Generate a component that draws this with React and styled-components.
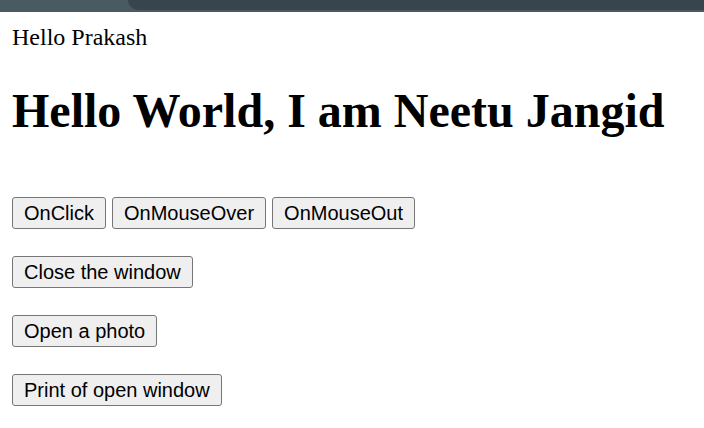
import React from "react";
import styled, { createGlobalStyle } from "styled-components";

const Global = createGlobalStyle`
  html, body { margin: 0; padding: 0; background: #ffffff; }
  body { font-family: "Liberation Serif", "Times New Roman", serif; }
`;

const ChromeBar = styled.div`
  position: relative;
  height: 12px;
  background: #4a5a63;
  overflow: hidden;
`;

const ChromeTab = styled.div`
  position: absolute;
  left: 128px;
  right: 0;
  top: 0;
  height: 10px;
  background: #38454d;
  border-bottom-left-radius: 10px;
`;

const Page = styled.main`
  padding: 12px;
  color: #000;
`;

const Greeting = styled.div`
  font-size: 24px;
  line-height: normal;
`;

const Title = styled.h1`
  font-size: 48px;
  font-weight: bold;
  margin: 32px 0 59px;
  line-height: normal;
`;

const Rows = styled.div`
  display: flex;
  flex-direction: column;
  gap: 27px;
`;

const Row = styled.div`
  display: flex;
  gap: 6px;
`;

const Button = styled.button`
  box-sizing: border-box;
  height: 32px;
  padding: 0 11px;
  font-family: "Liberation Sans", Arial, sans-serif;
  font-size: 20px;
  color: #000;
  background: #efefef;
  border: 1px solid #767676;
  border-radius: 3px;
  cursor: default;
`;

export default function App() {
  return (
    <>
      <Global />
      <ChromeBar>
        <ChromeTab />
      </ChromeBar>
      <Page>
        <Greeting>Hello Prakash</Greeting>
        <Title>Hello World, I am Neetu Jangid</Title>
        <Rows>
          <Row>
            <Button>OnClick</Button>
            <Button>OnMouseOver</Button>
            <Button>OnMouseOut</Button>
          </Row>
          <Row>
            <Button>Close the window</Button>
          </Row>
          <Row>
            <Button>Open a photo</Button>
          </Row>
          <Row>
            <Button>Print of open window</Button>
          </Row>
        </Rows>
      </Page>
    </>
  );
}
